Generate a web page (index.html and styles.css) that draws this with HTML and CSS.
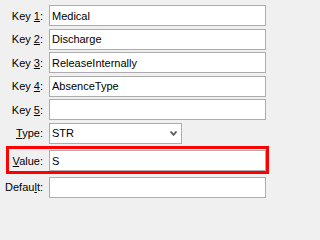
FILE: index.html
```html
<!DOCTYPE html>
<html>
<head>
<meta charset="utf-8">
<link rel="stylesheet" href="styles.css">
</head>
<body>
<div class="form">
  <div class="row">
    <label class="label">Key <u>1</u>:</label>
    <div class="field">Medical</div>
  </div>
  <div class="row">
    <label class="label">Key <u>2</u>:</label>
    <div class="field">Discharge</div>
  </div>
  <div class="row">
    <label class="label">Key <u>3</u>:</label>
    <div class="field">ReleaseInternally</div>
  </div>
  <div class="row">
    <label class="label">Key <u>4</u>:</label>
    <div class="field">AbsenceType</div>
  </div>
  <div class="row">
    <label class="label">Key <u>5</u>:</label>
    <div class="field"></div>
  </div>
  <div class="row">
    <label class="label"><u>T</u>ype:</label>
    <div class="field select">
      <span>STR</span>
      <svg class="chev" width="7" height="5" viewBox="0 0 7 5"><path d="M0.5 0.5 L3.5 3.8 L6.5 0.5" fill="none" stroke="#5a5a5a" stroke-width="1.8"/></svg>
    </div>
  </div>
  <div class="row highlight">
    <label class="label"><u>V</u>alue:</label>
    <div class="field">S</div>
  </div>
  <div class="row">
    <label class="label">Defau<u>l</u>t:</label>
    <div class="field"></div>
  </div>
</div>
</body>
</html>
```
FILE: styles.css
```css
html, body {
  margin: 0;
  padding: 0;
  background: #f0f0f0;
}
body {
  font-family: "Liberation Sans", Arial, sans-serif;
  font-size: 11px;
  color: #000;
}
.form {
  display: flex;
  flex-direction: column;
  gap: 2.5px;
  padding-top: 5px;
}
.row {
  display: flex;
  align-items: center;
}
.label {
  width: 49px;
  box-sizing: border-box;
  padding-right: 6px;
  text-align: right;
  white-space: nowrap;
}
.label u {
  text-underline-offset: 1px;
}
.field {
  width: 217px;
  height: 21px;
  box-sizing: border-box;
  border: 1px solid #acacac;
  background: #fff;
  padding: 0 2px;
  display: flex;
  align-items: center;
  white-space: nowrap;
}
.select {
  width: 133px;
  justify-content: space-between;
  padding-right: 4px;
}
.chev {
  display: block;
}
.highlight {
  margin-left: 6px;
  width: 263px;
  box-sizing: border-box;
  border: 3px solid #ff0000;
  padding-top: 1px;
}
.highlight .label {
  width: 40px;
}
```
